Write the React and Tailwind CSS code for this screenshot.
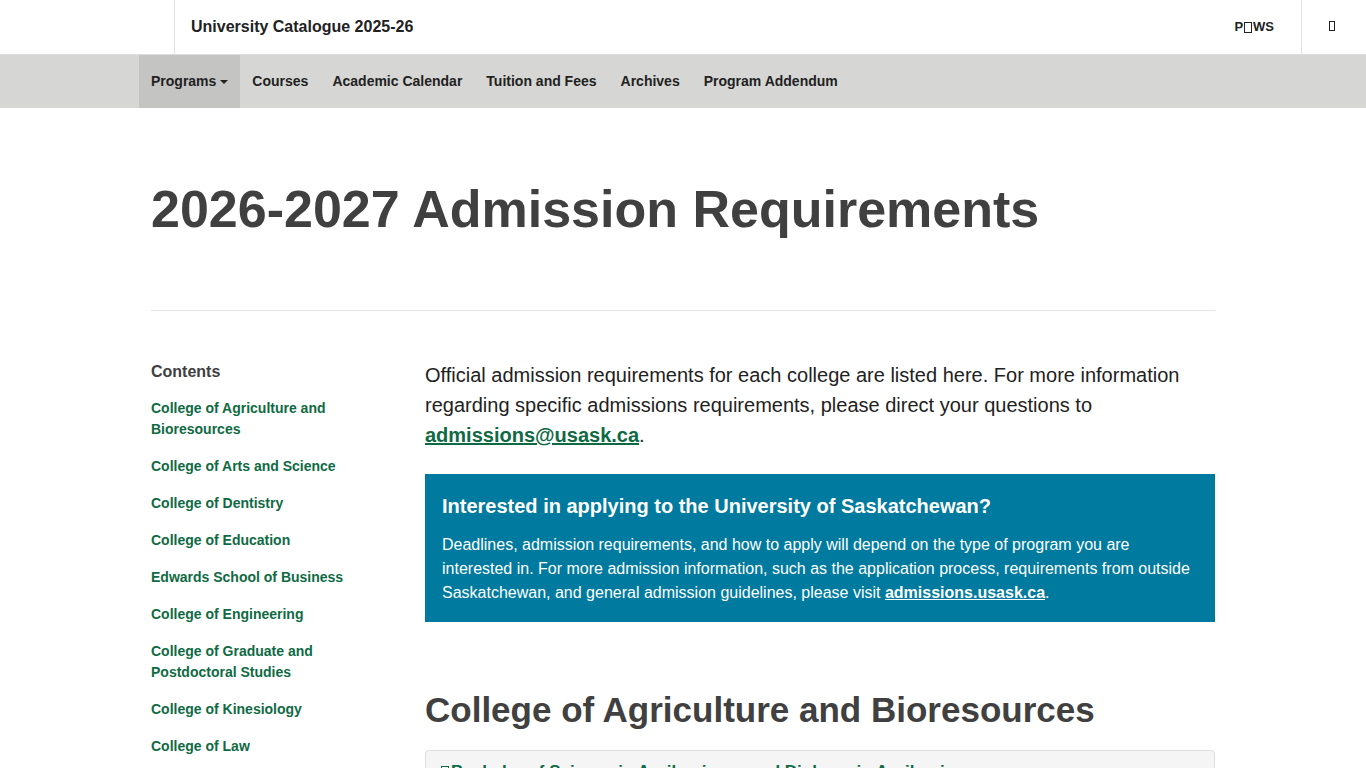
import React from 'react';

const contents = [
  'College of Agriculture and Bioresources',
  'College of Arts and Science',
  'College of Dentistry',
  'College of Education',
  'Edwards School of Business',
  'College of Engineering',
  'College of Graduate and Postdoctoral Studies',
  'College of Kinesiology',
  'College of Law',
  'College of Medicine',
  'College of Nursing',
  'College of Pharmacy and Nutrition',
];

const navItems = ['Courses', 'Academic Calendar', 'Tuition and Fees', 'Archives', 'Program Addendum'];

// Missing-glyph box, as the icon font renders without network
const Tofu = ({ className = '' }) => (
  <span className={`inline-block border border-current align-[-1px] ${className}`} />
);

export default function App() {
  return (
    <div className="min-h-screen bg-white text-[#222] font-['Liberation_Sans',Arial,sans-serif]">
      {/* Top header */}
      <header className="h-[55px] flex border-b border-[#dcdcdc] bg-white">
        <div className="w-[175px] border-r border-[#e2e2e2]" />
        <div className="flex-1 flex items-center pl-4">
          <span className="text-[16px] font-bold text-[#222]">University Catalogue 2025-26</span>
        </div>
        <div className="flex items-center pr-[27px] border-r border-[#e2e2e2]">
          <span className="text-[13px] font-bold text-[#222] flex items-center">
            P<Tofu className="w-[8px] h-[11px] mx-[1px]" />WS
          </span>
        </div>
        <div className="w-[64px] flex items-center justify-center pr-[4px]">
          <Tofu className="w-[6px] h-[10px] text-[#222] -mt-[2px]" />
        </div>
      </header>

      {/* Nav bar */}
      <nav className="h-[53px] bg-[#d6d6d4]">
        <div className="w-[1088px] mx-auto flex h-full">
          <div className="px-3 flex items-center bg-[#c4c4c2] text-[14px] font-bold text-[#222]">
            Programs
            <span className="ml-[4px] inline-block w-0 h-0 border-x-[4px] border-x-transparent border-t-[4px] border-t-[#222]" />
          </div>
          {navItems.map((n) => (
            <div key={n} className="px-3 flex items-center text-[14px] font-bold text-[#222]">{n}</div>
          ))}
        </div>
      </nav>

      <main className="w-[1088px] mx-auto px-3 pb-16">
        <h1 className="mt-[72px] text-[52px] leading-[59px] font-bold text-[#404040]">
          2026-2027 Admission Requirements
        </h1>
        <hr className="mt-[71px] border-t border-[#e6e6e6]" />

        <div className="flex gap-[32px] mt-[50px]">
          <aside className="w-[242px] shrink-0">
            <h2 className="text-[16px] leading-[22px] font-bold text-[#404040]">Contents</h2>
            <ul className="mt-[15px] flex flex-col gap-4">
              {contents.map((c) => (
                <li key={c}>
                  <a className="text-[14px] leading-[21px] font-bold text-[#0f6a43] block pr-8">{c}</a>
                </li>
              ))}
            </ul>
          </aside>

          <section className="flex-1 min-w-0 -mt-[1px]">
            <p className="text-[20px] leading-[30px] text-[#222]">
              Official admission requirements for each college are listed here. For more information regarding specific admissions requirements, please direct your questions to{' '}
              <a className="font-bold text-[#0f6a43] underline">admissions@usask.ca</a>.
            </p>

            <div className="mt-[24px] bg-[#007a9f] text-white px-[17px] pt-[18px] pb-[17px]">
              <h3 className="text-[20px] leading-[28px] font-bold">Interested in applying to the University of Saskatchewan?</h3>
              <p className="mt-[13px] text-[16px] leading-[24px]">
                Deadlines, admission requirements, and how to apply will depend on the type of program you are interested in. For more admission information, such as the application process, requirements from outside Saskatchewan, and general admission guidelines, please visit{' '}
                <a className="font-bold underline">admissions.usask.ca</a>.
              </p>
            </div>

            <h2 className="mt-[68px] text-[35px] leading-[40px] font-bold text-[#404040]">
              College of Agriculture and Bioresources
            </h2>

            <div className="mt-[20px] border border-[#dddddd] rounded-[4px] bg-[#f5f5f5] px-[15px] py-[10px]">
              <a className="text-[17px] leading-[22px] font-bold text-[#0f6a43] flex items-center">
                <Tofu className="w-[8px] h-[13px] mr-[2px]" />
                Bachelor of Science in Agribusiness and Diploma in Agribusiness
              </a>
            </div>
            <div className="border border-t-0 border-[#dddddd] rounded-b-[4px] p-[15px] text-[16px] leading-[24px]">
              Admission requirements for the Bachelor of Science in Agribusiness and the Diploma in Agribusiness programs.
            </div>
          </section>
        </div>
      </main>
    </div>
  );
}
